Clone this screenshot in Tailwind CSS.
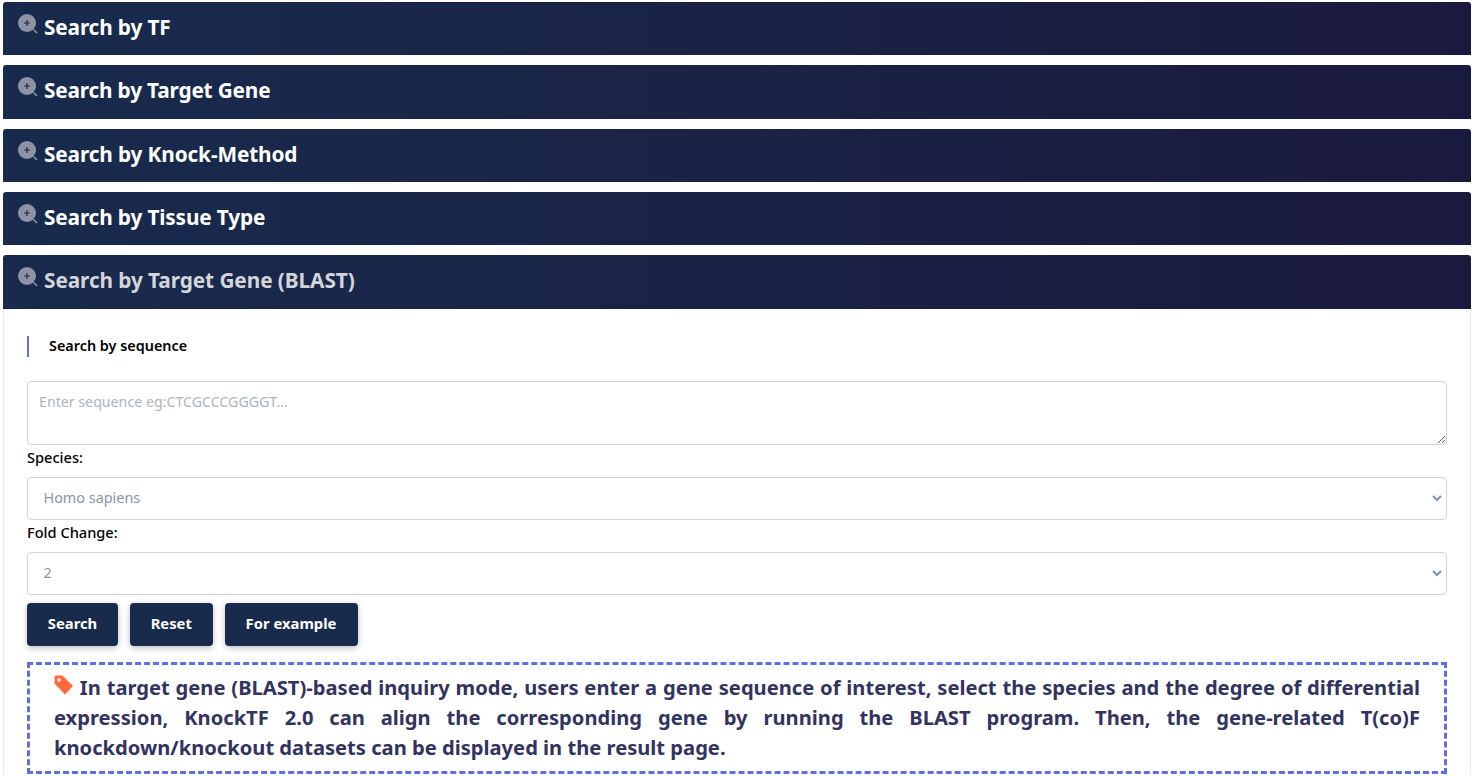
<!DOCTYPE html>
<html>
<head>
<meta charset="utf-8">
<script src="https://cdn.jsdelivr.net/npm/@tailwindcss/browser@4"></script>
</head>
<body class="bg-white overflow-hidden font-['Noto_Sans','Open_Sans',sans-serif]">
<div class="h-[776px] overflow-hidden pt-[2px] px-[3px]">
  <div class="flex flex-col gap-[10px]">
    <div class="h-[53.33px] flex items-start rounded-t-[3px] bg-gradient-to-r from-[#182b4d] to-[#1a1a3e] pl-[14px] pt-[10px] text-white">
      <svg class="w-[22px] h-[22px] mt-[2px] mr-[5px] shrink-0" viewBox="0 0 22 22"><circle cx="10" cy="9" r="9" fill="#8d93a5"/><path d="M7 9h6M10 6v6" stroke="#182b4d" stroke-width="1.2"/><path d="M16.5 15.5l3.5 3.5" stroke="#8d93a5" stroke-width="1.6"/></svg>
      <span class="text-[20.8px] font-bold leading-[31px] tracking-[-0.15px]">Search by TF</span>
    </div>
    <div class="h-[53.33px] flex items-start rounded-t-[3px] bg-gradient-to-r from-[#182b4d] to-[#1a1a3e] pl-[14px] pt-[10px] text-white">
      <svg class="w-[22px] h-[22px] mt-[2px] mr-[5px] shrink-0" viewBox="0 0 22 22"><circle cx="10" cy="9" r="9" fill="#8d93a5"/><path d="M7 9h6M10 6v6" stroke="#182b4d" stroke-width="1.2"/><path d="M16.5 15.5l3.5 3.5" stroke="#8d93a5" stroke-width="1.6"/></svg>
      <span class="text-[20.8px] font-bold leading-[31px] tracking-[-0.18px]">Search by Target Gene</span>
    </div>
    <div class="h-[53.33px] flex items-start rounded-t-[3px] bg-gradient-to-r from-[#182b4d] to-[#1a1a3e] pl-[14px] pt-[10px] text-white">
      <svg class="w-[22px] h-[22px] mt-[2px] mr-[5px] shrink-0" viewBox="0 0 22 22"><circle cx="10" cy="9" r="9" fill="#8d93a5"/><path d="M7 9h6M10 6v6" stroke="#182b4d" stroke-width="1.2"/><path d="M16.5 15.5l3.5 3.5" stroke="#8d93a5" stroke-width="1.6"/></svg>
      <span class="text-[20.8px] font-bold leading-[31px] tracking-[-0.13px]">Search by Knock-Method</span>
    </div>
    <div class="h-[53.33px] flex items-start rounded-t-[3px] bg-gradient-to-r from-[#182b4d] to-[#1a1a3e] pl-[14px] pt-[10px] text-white">
      <svg class="w-[22px] h-[22px] mt-[2px] mr-[5px] shrink-0" viewBox="0 0 22 22"><circle cx="10" cy="9" r="9" fill="#8d93a5"/><path d="M7 9h6M10 6v6" stroke="#182b4d" stroke-width="1.2"/><path d="M16.5 15.5l3.5 3.5" stroke="#8d93a5" stroke-width="1.6"/></svg>
      <span class="text-[20.8px] font-bold leading-[31px] tracking-[-0.15px]">Search by Tissue Type</span>
    </div>
    <div>
      <div class="h-[53.33px] flex items-start rounded-t-[3px] bg-gradient-to-r from-[#182b4d] to-[#1a1a3e] pl-[14px] pt-[10px] text-white">
        <svg class="w-[22px] h-[22px] mt-[2px] mr-[5px] shrink-0" viewBox="0 0 22 22"><circle cx="10" cy="9" r="9" fill="#8d93a5"/><path d="M7 9h6M10 6v6" stroke="#182b4d" stroke-width="1.2"/><path d="M16.5 15.5l3.5 3.5" stroke="#8d93a5" stroke-width="1.6"/></svg>
        <span class="text-[20.8px] font-bold leading-[31px] tracking-[-0.08px] text-[#d3d5db]">Search by Target Gene (BLAST)</span>
      </div>
      <div class="border-x border-[#e9ecef] px-[23px] pt-[27px]">
        <div class="border-l-2 border-[#5f6fe3] h-[21px] pl-[20px] pb-[2px] flex items-center text-[14.4px] leading-[19px] font-semibold text-black mb-[24px]">Search by sequence</div>
        <textarea placeholder="Enter sequence eg:CTCGCCCGGGGT..." class="block w-full h-[64px] border border-[#ced4da] rounded-[4px] px-[11px] pt-[9px] pb-[7px] text-[14.2px] leading-[21px] placeholder:text-[#adb5bd] outline-none"></textarea>
        <label class="block text-[14.6px] leading-[20px] font-medium text-black mt-[2px] mb-[10px]">Species:</label>
        <div class="h-[43px] border border-[#ced4da] rounded-[4px] pl-[15.5px] pr-[3px] pb-[1px] flex items-center justify-between text-[14.4px] text-[#8a96a8]">
          <span>Homo sapiens</span>
          <svg class="w-[12px] h-[8px] mt-[1px]" viewBox="0 0 12 8"><path d="M2 2l4 4 4-4" fill="none" stroke="#8492a6" stroke-width="2"/></svg>
        </div>
        <label class="block text-[14.6px] leading-[20px] font-medium text-black mt-[2px] mb-[10px]">Fold Change:</label>
        <div class="h-[43px] border border-[#ced4da] rounded-[4px] pl-[15.5px] pr-[3px] pb-[1px] flex items-center justify-between text-[14.4px] text-[#8a96a8]">
          <span>2</span>
          <svg class="w-[12px] h-[8px] mt-[1px]" viewBox="0 0 12 8"><path d="M2 2l4 4 4-4" fill="none" stroke="#8492a6" stroke-width="2"/></svg>
        </div>
        <div class="flex gap-[12px] mt-[8px]">
          <button class="w-[91px] h-[43px] pb-[2px] rounded-[4px] bg-[#182b4d] text-white text-[14.8px] font-bold shadow-[0_2px_6px_rgba(0,0,0,0.25)]">Search</button>
          <button class="w-[82.5px] h-[43px] pb-[2px] rounded-[4px] bg-[#182b4d] text-white text-[14.8px] font-bold shadow-[0_2px_6px_rgba(0,0,0,0.25)]">Reset</button>
          <button class="w-[133px] h-[43px] pb-[2px] rounded-[4px] bg-[#182b4d] text-white text-[14.8px] font-bold shadow-[0_2px_6px_rgba(0,0,0,0.25)]">For example</button>
        </div>
        <div class="mt-[16px] h-[112px] border-[3px] border-dashed border-[#5f6fe3] px-[24px] pt-[7px] text-[20.15px] leading-[30px] font-bold text-[#33335f] text-justify">
          <svg class="inline-block w-[20px] h-[20px] align-[0px]" viewBox="0 0 20 20"><path d="M1.5 0.5h7l10.5 10.5-8 8.5L0.5 8.5V1.5z" fill="#ff6a3d"/><circle cx="5" cy="5" r="1.7" fill="#fff"/></svg>
          In target gene (BLAST)-based inquiry mode, users enter a gene sequence of interest, select the species and the degree of differential expression, KnockTF 2.0 can align the corresponding gene by running the BLAST program. Then, the gene-related T(co)F knockdown/knockout datasets can be displayed in the result page.
        </div>
      </div>
    </div>
  </div>
</div>
</body>
</html>
